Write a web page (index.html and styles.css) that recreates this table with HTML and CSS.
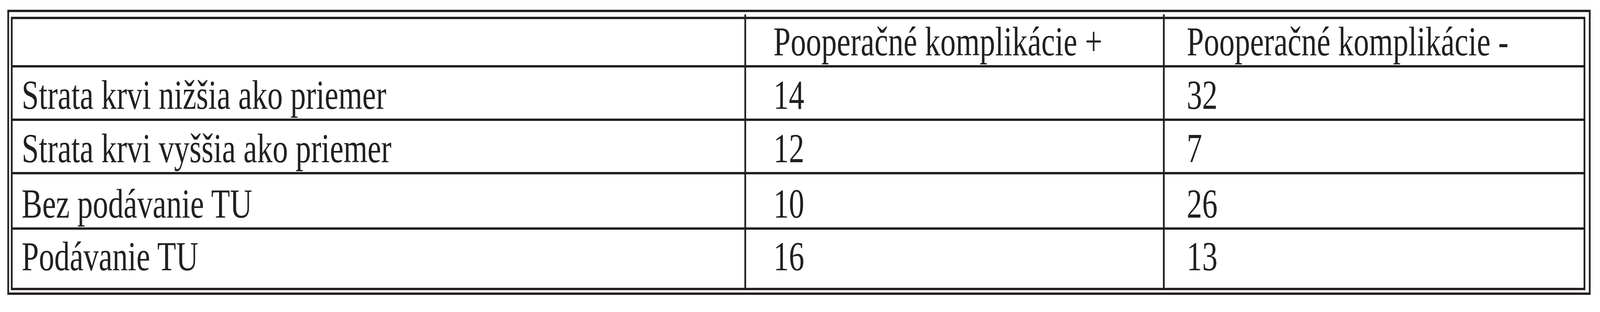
FILE: index.html
```html
<!DOCTYPE html>
<html lang="sk">
<head>
<meta charset="utf-8">
<title>Pooperačné komplikácie</title>
<link rel="stylesheet" href="styles.css">
</head>
<body>
<div class="viewport">
  <div class="stage">
    <div class="frame">
      <table class="data">
        <colgroup>
          <col class="c-label">
          <col class="c-plus">
          <col class="c-minus">
        </colgroup>
        <tbody>
          <tr class="r-head">
            <td class="label"></td>
            <td class="plus">Pooperačné komplikácie +</td>
            <td class="minus">Pooperačné komplikácie -</td>
          </tr>
          <tr class="r-1">
            <td class="label">Strata krvi nižšia ako priemer</td>
            <td class="plus">14</td>
            <td class="minus">32</td>
          </tr>
          <tr class="r-2">
            <td class="label">Strata krvi vyššia ako priemer</td>
            <td class="plus">12</td>
            <td class="minus">7</td>
          </tr>
          <tr class="r-3">
            <td class="label">Bez podávanie TU</td>
            <td class="plus">10</td>
            <td class="minus">26</td>
          </tr>
          <tr class="r-4">
            <td class="label">Podávanie TU</td>
            <td class="plus">16</td>
            <td class="minus">13</td>
          </tr>
        </tbody>
      </table>
    </div>
  </div>
</div>
</body>
</html>
```

FILE: styles.css
```css
:root {
  --ink: #231f20;
  /* scale factors from the 5451 x 800 design to the actual window */
  --sx: tan(atan2(100vw, 5451px));
  --sy: tan(atan2(100vh, 800px));
}

html, body {
  margin: 0;
  padding: 0;
  background: #ffffff;
  overflow: hidden;
}

body {
  font-family: "Liberation Serif", "Times New Roman", serif;
  color: var(--ink);
}

.viewport {
  width: 100vw;
  height: 100vh;
  overflow: hidden;
  position: relative;
}

.stage {
  position: absolute;
  left: 0;
  top: 0;
  width: 5451px;
  height: 800px;
  transform-origin: 0 0;
  transform: scale(var(--sx), var(--sy));
}

.frame {
  width: 5364px;
  margin: 0 0 0 25px;
  position: relative;
  top: 25px;
  border: 6px solid var(--ink);
  padding: 12px 12px 6px 6px;
}

.data {
  width: 5364px;
  table-layout: fixed;
  border-collapse: separate;
  border-spacing: 6px;
  background: var(--ink);
}

.c-label { width: 2493px; }
.c-plus  { width: 1420px; }
.c-minus { width: 1427px; }

.data td {
  background: #ffffff;
  font-size: 105px;
  line-height: 1;
  white-space: nowrap;
  vertical-align: bottom;
  padding-top: 0;
  padding-bottom: 8px;
}

.data td.label { padding-left: 31px; }
.data td.plus  { padding-left: 93px; }
.data td.minus { padding-left: 75px; }

/* column rules poke slightly above the inner border */
.r-head td.plus,
.r-head td.minus {
  position: relative;
}

.r-head td.plus::before,
.r-head td.minus::before {
  content: "";
  position: absolute;
  top: -12px;
  left: -6px;
  width: 6px;
  height: 6px;
  background: var(--ink);
}

.r-head { height: 118px; }
.r-1 { height: 131px; }
.r-2 { height: 131px; }
.r-3 { height: 136px; }
.r-4 { height: 149px; }

.r-4 td { padding-bottom: 28px; }
```
